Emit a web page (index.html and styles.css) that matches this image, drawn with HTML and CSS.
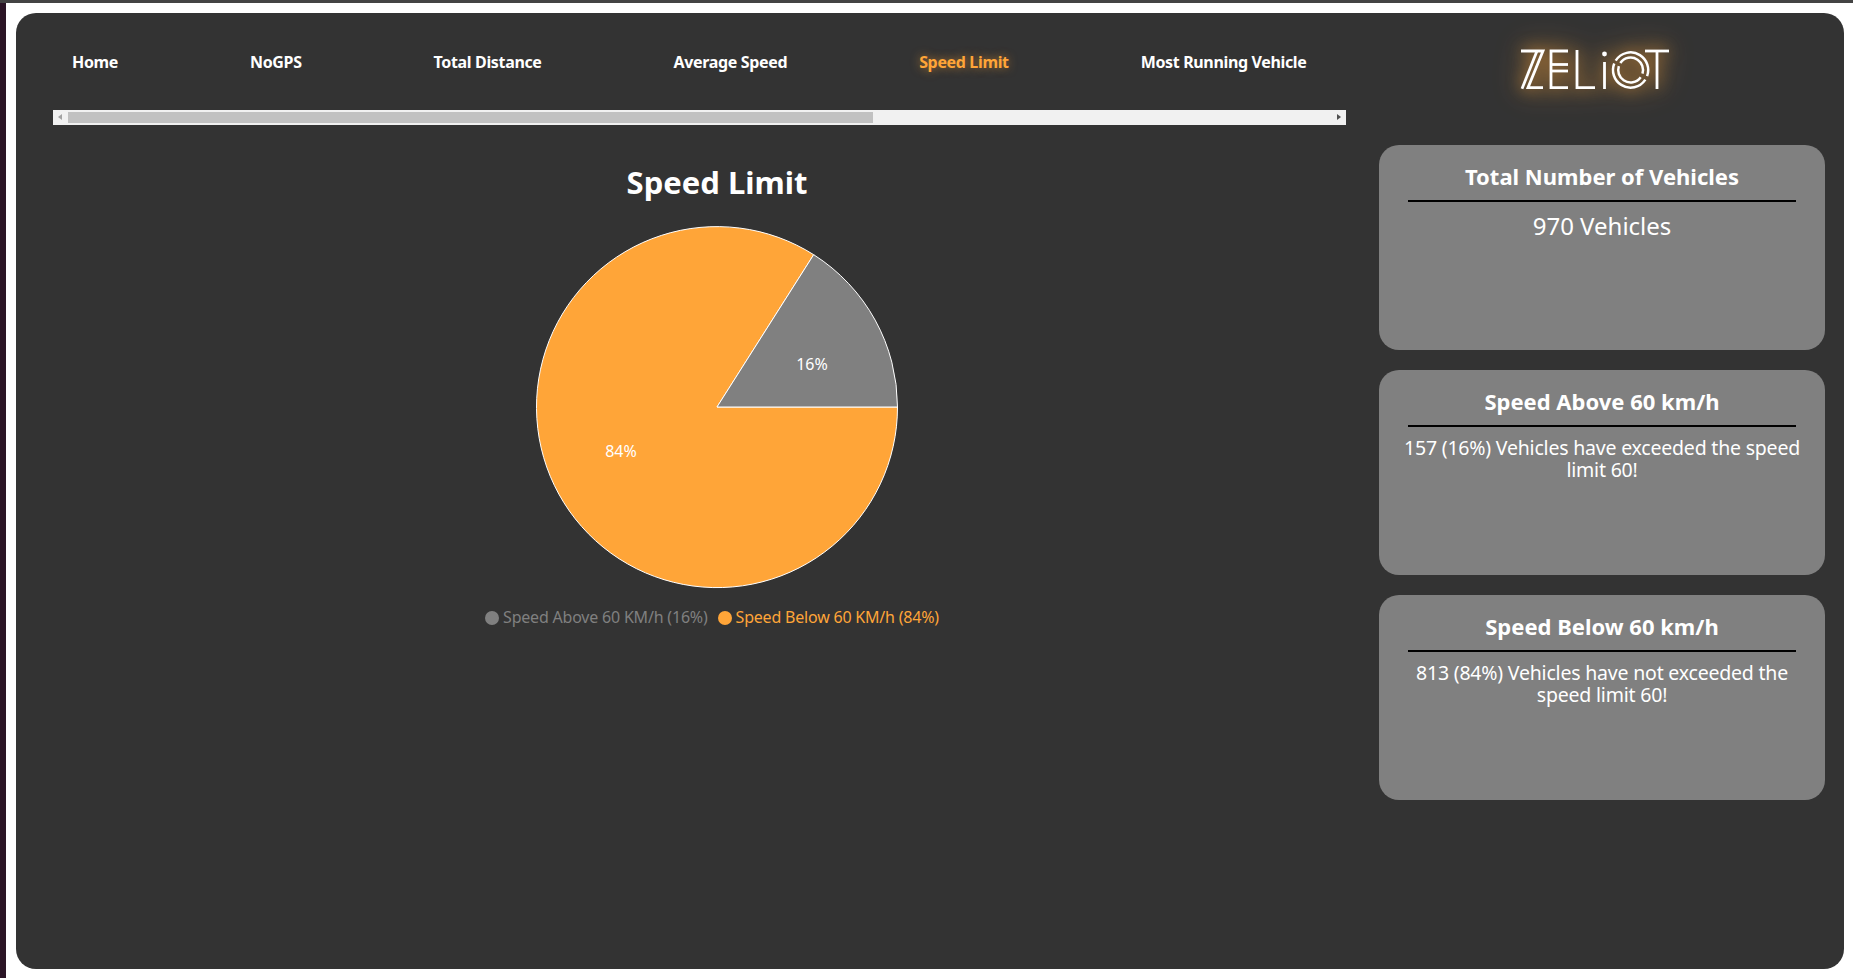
FILE: index.html
```html
<!DOCTYPE html>
<html lang="en">
<head>
    <meta charset="UTF-8">
    <meta name="viewport" content="width=device-width, initial-scale=1.0">
    <title>Speed Limit</title>
    <link rel="stylesheet" href="styles.css">
</head>
<body>
    <div class="top-line"></div>
    <div class="page">
        <div class="side-line"></div>
        <main class="dashboard">
            <section class="left-col">
                <nav class="nav">
                    <a href="#">Home</a>
                    <a href="#">NoGPS</a>
                    <a href="#">Total Distance</a>
                    <a href="#">Average Speed</a>
                    <a href="#" class="active">Speed Limit</a>
                    <a href="#">Most Running Vehicle</a>
                </nav>
                <div class="scrollbar">
                    <span class="arrow arrow-left"></span>
                    <div class="thumb"></div>
                    <span class="arrow arrow-right"></span>
                </div>
                <div class="chart">
                    <h1>Speed Limit</h1>
                    <svg class="pie" width="400" height="400" viewBox="0 0 400 400">
                        <path d="M200 200 L380.5 200 A180.5 180.5 0 1 1 296.7 47.7 Z" fill="#ffa538" stroke="#fff" stroke-width="1"/>
                        <path d="M200 200 L296.7 47.7 A180.5 180.5 0 0 1 380.5 200 Z" fill="#808080" stroke="#fff" stroke-width="1"/>
                        <text x="295" y="163" class="pie-label">16%</text>
                        <text x="104" y="250" class="pie-label">84%</text>
                    </svg>
                    <div class="legend">
                        <span class="legend-item above"><i></i>Speed Above 60 KM/h (16%)</span>
                        <span class="legend-item below"><i></i>Speed Below 60 KM/h (84%)</span>
                    </div>
                </div>
            </section>
            <aside class="right-col">
                <div class="logo-wrap">
                    <svg class="logo" width="190" height="80" viewBox="1500 30 190 80" role="img" aria-label="Zeliot logo">
                        <g fill="none" stroke="#fff" stroke-width="2.8">
                            <polyline points="1521,51 1543,51 1528,87.6 1543,87.6"/>
                            <line x1="1537" y1="51" x2="1522" y2="88.8"/>
                            <polyline points="1568,51 1551,51 1551,87.6 1568,87.6"/>
                            <line x1="1551" y1="64.5" x2="1568" y2="64.5"/>
                            <line x1="1551" y1="71" x2="1568" y2="71"/>
                            <polyline points="1577,50 1577,87.6 1595,87.6"/>
                            <line x1="1604.5" y1="62" x2="1604.5" y2="89"/>
                            <circle cx="1630.6" cy="70" r="17.6" stroke-width="2.5" stroke-dasharray="51.3 4" transform="rotate(-148 1630.6 70)"/>
                            <circle cx="1630.6" cy="70" r="12.4" stroke-width="2.5" stroke-dasharray="35 4" transform="rotate(-146 1630.6 70)"/>
                            <line x1="1645" y1="51" x2="1669" y2="51"/>
                            <line x1="1657" y1="51" x2="1657" y2="89"/>
                        </g>
                        <circle cx="1604.5" cy="54" r="2.4" fill="#fff"/>
                    </svg>
                </div>
                <div class="card">
                    <h2>Total Number of Vehicles</h2>
                    <p class="big">970 Vehicles</p>
                </div>
                <div class="card">
                    <h2>Speed Above 60 km/h</h2>
                    <p>157 (16%) Vehicles have exceeded the speed limit 60!</p>
                </div>
                <div class="card">
                    <h2>Speed Below 60 km/h</h2>
                    <p>813 (84%) Vehicles have not exceeded the speed limit 60!</p>
                </div>
            </aside>
        </main>
    </div>
</body>
</html>
```

FILE: styles.css
```css
* {
    box-sizing: border-box;
}

body {
    margin: 0;
    height: 100vh;
    overflow: hidden;
    background-color: #fff;
    font-family: "Noto Sans", sans-serif;
    color: #fff;
}

.top-line {
    height: 3px;
    background-color: #444;
}

.page {
    display: flex;
    height: 975px;
}

.side-line {
    width: 6px;
    background-color: #2b1526;
}

.dashboard {
    display: flex;
    width: 1828px;
    height: 956px;
    margin: 10px 0 0 10px;
    padding: 0 9px 0 37px;
    gap: 33px;
    background-color: #333;
    border-radius: 20px;
}

.left-col {
    width: 1293px;
}

.nav {
    display: flex;
    align-items: center;
    gap: 132px;
    height: 97px;
    padding-left: 19px;
}

.nav a {
    color: #fff;
    font-size: 16px;
    font-weight: bold;
    letter-spacing: -0.35px;
    text-decoration: none;
    white-space: nowrap;
}

.nav a.active {
    color: #ffa538;
    text-shadow: 0 0 10px rgba(255, 165, 56, 0.6);
}

.scrollbar {
    display: flex;
    align-items: center;
    height: 15px;
    padding: 0 15px;
    position: relative;
    background-color: #f1f1f1;
}

.thumb {
    width: 805px;
    height: 11px;
    background-color: #c1c1c1;
}

.arrow {
    position: absolute;
    top: 4px;
    border-top: 3.5px solid transparent;
    border-bottom: 3.5px solid transparent;
}

.arrow-left {
    left: 5px;
    border-right: 4px solid #a3a3a3;
}

.arrow-right {
    right: 5px;
    border-left: 4px solid #505050;
}

.chart {
    display: flex;
    flex-direction: column;
    align-items: center;
    padding-left: 35px;
}

h1 {
    margin: 39px 0 6.5px;
    font-size: 31px;
    line-height: 36px;
    font-weight: bold;
}

.pie {
    display: block;
}

.pie-label {
    fill: #fff;
    font-size: 16px;
    text-anchor: middle;
}

.legend {
    display: flex;
    gap: 10px;
    margin: -1px 10px 0 0;
    font-size: 16px;
    line-height: 22px;
    letter-spacing: -0.2px;
}

.legend-item {
    display: flex;
    align-items: center;
    gap: 4px;
}

.legend-item i {
    width: 14px;
    height: 14px;
    margin-top: 2px;
    border-radius: 50%;
    background-color: currentColor;
}

.above {
    color: #808080;
}

.below {
    color: #ffa538;
}

.right-col {
    display: flex;
    flex-direction: column;
    width: 446px;
    gap: 20px;
}

.logo-wrap {
    display: flex;
    justify-content: center;
    height: 112px;
    padding-right: 15px;
}

.logo {
    margin-top: 17px;
    filter: drop-shadow(0 0 8px rgba(255, 165, 56, 0.75)) drop-shadow(0 0 14px rgba(255, 165, 56, 0.45));
}

.card {
    height: 205px;
    padding: 15px 29px;
    text-align: center;
    background-color: #808080;
    border-radius: 20px;
}

.card h2 {
    margin: 0;
    padding-bottom: 8px;
    font-size: 22px;
    line-height: 32px;
    font-weight: bold;
    white-space: nowrap;
    border-bottom: 2px solid #000;
}

.card p {
    margin: 9.5px -8px 0;
    font-size: 19.5px;
    line-height: 22.5px;
    letter-spacing: -0.2px;
}

.card p.big {
    margin-top: 9px;
    font-size: 24px;
    line-height: 30px;
    letter-spacing: 0;
}
```
